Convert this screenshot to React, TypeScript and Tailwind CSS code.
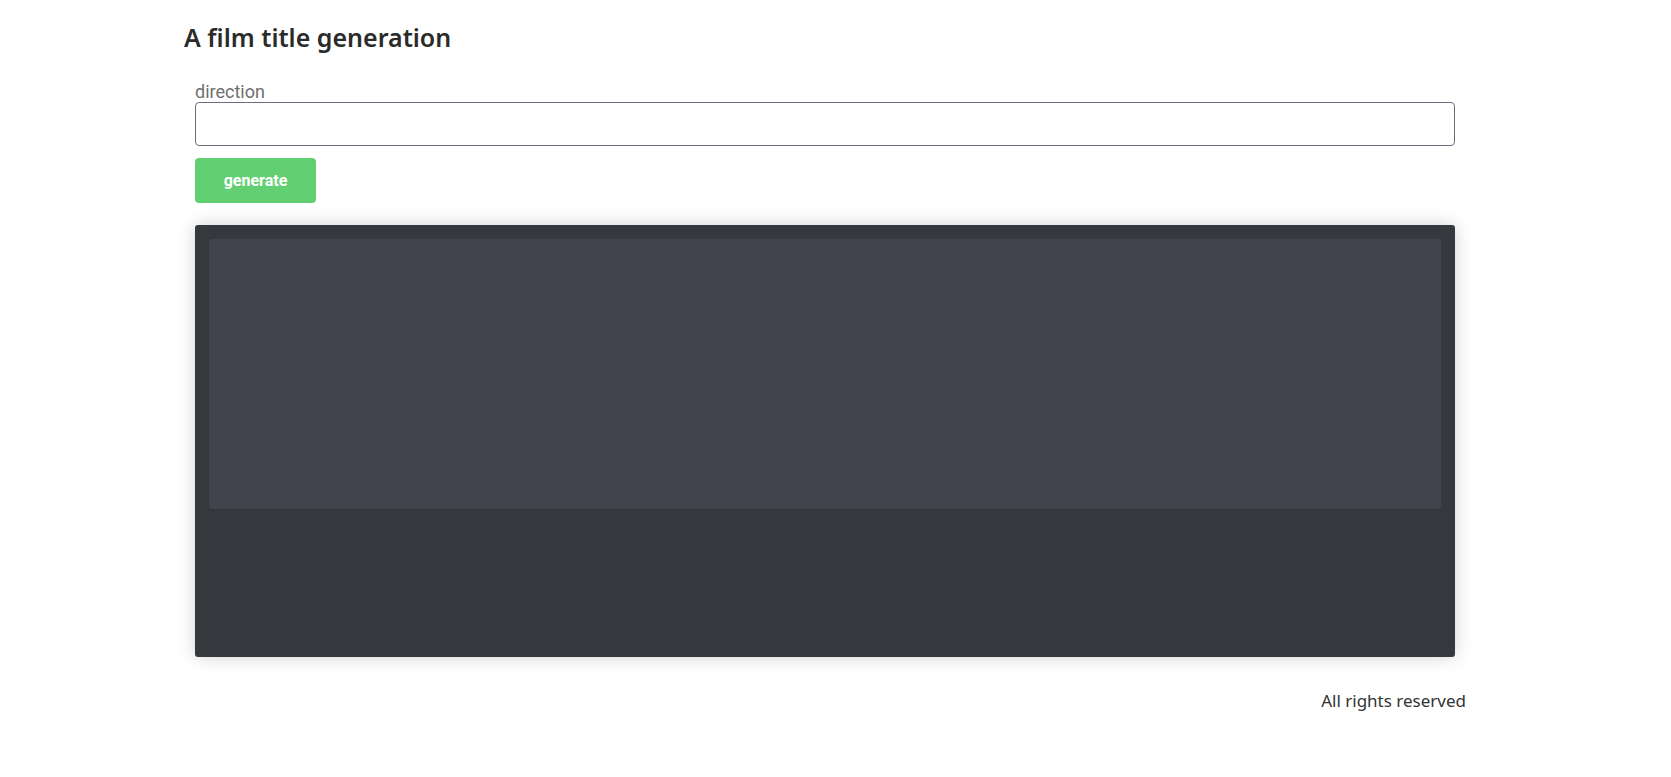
import React from "react";

export default function App() {
  return (
    <div className="min-h-screen bg-white">
      <div className="ml-[184px] w-[1282px]">
        <h1 className="pt-[21px] text-[25px] leading-[32px] font-semibold text-[#2b2b2b]" style={{ fontFamily: '"Noto Sans", "Open Sans", sans-serif' }}>
          A film title generation
        </h1>
        <div className="px-[11px] pt-[28px]">
          <label className="block text-[18px] leading-[21px] text-[#6f6f6f]" style={{ fontFamily: 'Roboto, sans-serif' }}>
            direction
          </label>
          <input
            type="text"
            className="block w-full h-[44px] rounded-[4px] border border-[#6b6f7b] bg-white px-3 outline-none"
          />
          <button
            className="mt-[12px] h-[45px] w-[121px] rounded-[4px] bg-[#62d072] text-[16px] font-bold text-white"
            style={{ fontFamily: 'Roboto, sans-serif' }}
          >
            generate
          </button>
          <div className="mt-[22px] h-[432px] rounded-[3px] bg-[#35383d] p-[14px] shadow-[0_0_18px_rgba(0,0,0,0.18)]">
            <div className="h-[270px] rounded-[3px] bg-[#41444c]" />
          </div>
        </div>
        <div className="mt-[31px] text-right text-[17px] text-[#333]" style={{ fontFamily: '"Noto Sans", "Open Sans", sans-serif' }}>
          All rights reserved
        </div>
      </div>
    </div>
  );
}
